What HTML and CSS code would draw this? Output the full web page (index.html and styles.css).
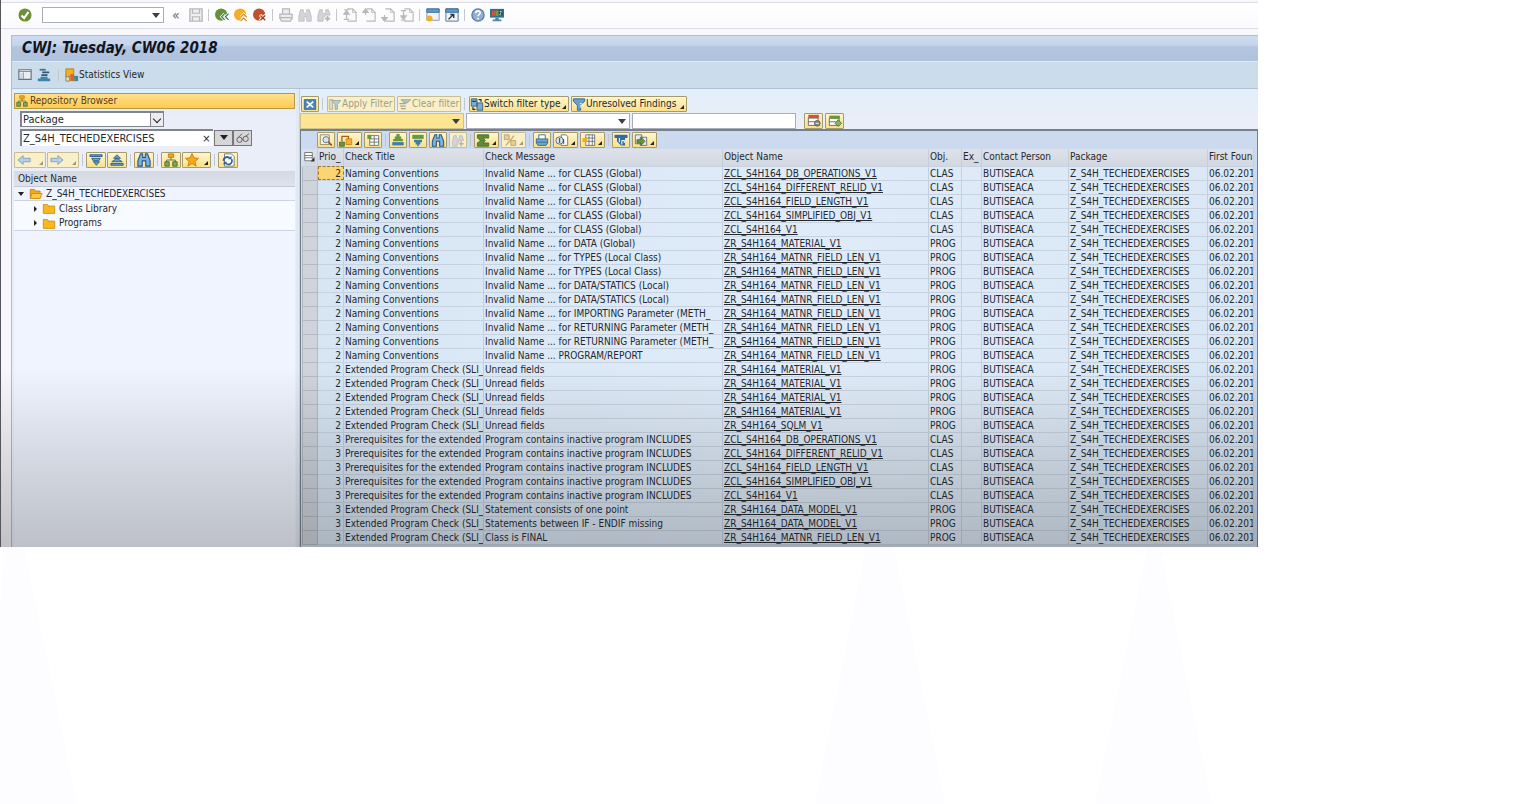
FILE: index.html
```
<!DOCTYPE html>
<html lang="en">
<head>
  <meta charset="UTF-8">
  <title>CWJ: Tuesday, CW06 2018</title>
  <link rel="stylesheet" href="styles.css">
</head>
<body>

<!-- icon set, all drawn on a 16x16 grid -->
<svg class="defs" aria-hidden="true">
  <symbol id="i-ok" viewBox="0 0 16 16"><circle cx="8" cy="8" r="7.5" fill="#6f8f35"/><path d="M4 8.5l3 3 5-7" fill="none" stroke="#fff" stroke-width="2.4"/></symbol>
  <symbol id="i-save" viewBox="0 0 16 16"><path d="M1 1h14v14H1z" fill="#eeeef0" stroke="#b9b9bd" stroke-width="1.6"/><path d="M4 1v5h8V1M4 15v-5h8v5" fill="none" stroke="#b9b9bd" stroke-width="1.4"/></symbol>
  <symbol id="i-back" viewBox="0 0 16 16"><circle cx="7" cy="7.5" r="7" fill="#64913d"/><path d="M11 6.500l-3.500 3.500 3.500 3.500M15.500 6.500L12 10l3.500 3.500" fill="none" stroke="#fff" stroke-width="3"/><path d="M11 6.500l-3.500 3.500 3.500 3.500M15.500 6.500L12 10l3.500 3.500" fill="none" stroke="#3f7050" stroke-width="1.300"/></symbol>
  <symbol id="i-exit" viewBox="0 0 16 16"><circle cx="7" cy="7.500" r="7" fill="#f2ae27"/><path d="M7.500 10.500L11 7l3.500 3.500M7.500 15L11 11.500l3.500 3.500" fill="none" stroke="#fff" stroke-width="3"/><path d="M7.500 10.500L11 7l3.500 3.500M7.500 15L11 11.500l3.500 3.500" fill="none" stroke="#c98518" stroke-width="1.300"/></symbol>
  <symbol id="i-cancel" viewBox="0 0 16 16"><circle cx="7" cy="7.500" r="7" fill="#c0512a"/><path d="M8 8l6.500 6.500M14.500 8L8 14.500" stroke="#fff" stroke-width="3.600"/><path d="M8.500 8.500l5.500 5.500M14 8.500L8.500 14" stroke="#a5391c" stroke-width="1.500"/></symbol>
  <symbol id="i-print" viewBox="0 0 16 16"><path d="M4 7V1h8v6M1 7h14v5l-2 3H3l-2-3z" fill="#ececee" stroke="#b5b5ba" stroke-width="1.400"/><path d="M1 11h14" stroke="#b5b5ba" stroke-width="1.400"/></symbol>
  <symbol id="i-find" viewBox="0 0 16 16"><path d="M3 2h3v3l1 1h2l1-1V2h3l2 7v6h-5v-5H7v5H1V9z" fill="#d4d4d8" stroke="#bdbdc2"/></symbol>
  <symbol id="i-findnext" viewBox="0 0 16 16"><path d="M3 2h3v3l1 1h2l1-1V2h3l2 6H9v2H7v5H1V9z" fill="#d4d4d8" stroke="#bdbdc2"/><path d="M12 9v6M9 12h6" stroke="#b5b5ba" stroke-width="2"/></symbol>
  <symbol id="i-page" viewBox="0 0 16 16"><path d="M5 1h6l4 4v10H5" fill="#fafafa" stroke="#b9b9bd" stroke-width="1.300"/><path d="M11 1v4h4" fill="none" stroke="#b9b9bd"/></symbol>
  <symbol id="i-first" viewBox="0 0 16 16"><use href="#i-page"/><path d="M1 2h6M4 3l-3 4h6zM4 7v5M1 13h6" fill="#b9b9bd" stroke="#b9b9bd" stroke-width="1.400"/></symbol>
  <symbol id="i-prev" viewBox="0 0 16 16"><use href="#i-page"/><path d="M1 5l3-4 3 4zM4 4v4" fill="#b9b9bd" stroke="#b9b9bd" stroke-width="1.400"/></symbol>
  <symbol id="i-next" viewBox="0 0 16 16"><use href="#i-page"/><path d="M1 11l3 4 3-4zM4 12V8" fill="#b9b9bd" stroke="#b9b9bd" stroke-width="1.400"/></symbol>
  <symbol id="i-last" viewBox="0 0 16 16"><use href="#i-page"/><path d="M1 3h6M4 3v6M1 9l3 4 3-4zM1 14h6" fill="#b9b9bd" stroke="#b9b9bd" stroke-width="1.400"/></symbol>
  <symbol id="i-session" viewBox="0 0 16 16"><path d="M1 1h14v13H1z" fill="#eef4fa" stroke="#7d93a8"/><path d="M1 1h14v4H1z" fill="#5b9bc9" stroke="#3a6a94"/><circle cx="4" cy="12" r="3.500" fill="#f5b022"/></symbol>
  <symbol id="i-shortcut" viewBox="0 0 16 16"><path d="M1 1h14v14H1z" fill="#eef4fa" stroke="#46698a"/><path d="M1 1h14v4H1z" fill="#5b9bc9" stroke="#3a6a94"/><path d="M4 13l5-5M6 7.500h4v4" fill="none" stroke="#333" stroke-width="1.600"/></symbol>
  <symbol id="i-help" viewBox="0 0 16 16"><circle cx="8" cy="8" r="7" fill="#8fb0d2" stroke="#54799f" stroke-width="1.400"/><path d="M5.500 6c0-3.500 5-3.500 5-.5 0 2-2.500 2-2.500 4M8 11v2" fill="none" stroke="#fff" stroke-width="1.800"/></symbol>
  <symbol id="i-monitor" viewBox="0 0 16 16"><path d="M0 1h16v10H0z" fill="#2c6f98"/><path d="M2 3h6v6H2z" fill="#d4502c"/><path d="M7 3h3v6H7z" fill="#70a03c"/><path d="M10 3h4v6h-4z" fill="#193c52"/><path d="M11 4h2l-2 4h2" fill="none" stroke="#fff" stroke-width=".8"/><path d="M6 11h4v2h3v2H3v-2h3z" fill="#4c86a8"/></symbol>
  <symbol id="i-layout" viewBox="0 0 16 16"><path d="M1 2h14v11H1z" fill="#e9eef4" stroke="#66707c" stroke-width="1.300"/><path d="M1 4h14M6 5v8" stroke="#7a8592"/><path d="M3 7h1M3 9h1M3 11h1" stroke="#8c96a3"/></symbol>
  <symbol id="i-tree" viewBox="0 0 16 16"><path d="M3 1h7v2H3z" fill="#3d7199"/><path d="M6 4h8v2H6zM5 7h7v2H5z" fill="#2f5878"/><path d="M1 12h14v3H1zM4 10h8v2H4z" fill="#3e84ab"/></symbol>
  <symbol id="i-stat" viewBox="0 0 16 16"><path d="M1 1h9v9H1z" fill="#f4ae20" stroke="#b97d13"/><path d="M1 10h4v5H1z" fill="#e8e0d0" stroke="#8b7a50"/><path d="M6 7h4v8H6z" fill="#d9622e"/><path d="M10 9h5v6h-5z" fill="#3e84ab"/><path d="M9 11h3v4H9z" fill="#6c9a3f"/></symbol>
  <symbol id="i-repo" viewBox="0 0 16 16"><path d="M5 1h6v4H5z" fill="#f2a51d" stroke="#c77c10"/><path d="M8 5v3M3 11V8h10v3" fill="none" stroke="#4e6b30"/><path d="M1 10h5v5H1zM10 10h5v5h-5z" fill="#83a753" stroke="#4a6d2b"/></symbol>
  <symbol id="i-left" viewBox="0 0 16 16"><path d="M1 8l6-5v3h8v4H7v3z" fill="#b8cfe6" stroke="#7d9cbd"/></symbol>
  <symbol id="i-right" viewBox="0 0 16 16"><path d="M15 8L9 3v3H1v4h8v3z" fill="#b8cfe6" stroke="#7d9cbd"/></symbol>
  <symbol id="i-expand" viewBox="0 0 16 16"><path d="M1 2h14v2H1z" fill="#6a9dc4" stroke="#2c5d88"/><path d="M3 6h10l-2 3H5z" fill="#6a9dc4" stroke="#2c5d88"/><path d="M5 10h7l-3.500 4z" fill="#6a9dc4" stroke="#2c5d88"/></symbol>
  <symbol id="i-collapse" viewBox="0 0 16 16"><path d="M4 6l4-4 4 4zM2 10l6-4 6 4z" fill="#6a9dc4" stroke="#2c5d88"/><path d="M1 12h14v2H1z" fill="#6a9dc4" stroke="#2c5d88"/></symbol>
  <symbol id="i-glass" viewBox="0 0 16 16"><path d="M4 1h2.500v4h3V1H12l3 8v6h-5V9H6v6H1V9z" fill="#7db0da" stroke="#28598a" stroke-width="1.300"/></symbol>
  <symbol id="i-star" viewBox="0 0 16 16"><path d="M8 .5l2.300 5 5.200.6-4 3.500 1.200 5.400L8 12.200 3.300 15l1.200-5.400-4-3.500 5.200-.6z" fill="#f5a81c" stroke="#cd7f0c"/></symbol>
  <symbol id="i-reload" viewBox="0 0 16 16"><path d="M4 1h8l3 3v11H4z" fill="#fff" stroke="#66707c"/><path d="M3 9a4 4 0 0 1 7-3M12 7a4 4 0 0 1-7 4" fill="none" stroke="#2f6192" stroke-width="2"/><path d="M8 7h4V3zM7 10H3v4z" fill="#2f6192"/></symbol>
  <symbol id="i-specs" viewBox="0 0 16 16"><circle cx="4" cy="10" r="3" fill="none" stroke="#555"/><circle cx="11" cy="9" r="3" fill="none" stroke="#555"/><path d="M3 7l4-4M11 6l4-3M7 10l1-1" stroke="#555"/></symbol>
  <symbol id="i-folder" viewBox="0 0 16 16"><path d="M1 3h5l1.500 2H15v9H1z" fill="#f9b91d" stroke="#c98a12"/></symbol>
  <symbol id="i-open" viewBox="0 0 16 16"><path d="M1 3h5l1.500 2H13v9H1z" fill="#f6a71b" stroke="#b97d13"/><path d="M3 8h12.500L13 14H1z" fill="#ffc83e" stroke="#c98a12"/></symbol>
  <symbol id="i-close" viewBox="0 0 16 16"><path d="M1 2h14v12H1z" fill="#4b88b8" stroke="#2f6192"/><path d="M4 4.500l8 7M12 4.500l-8 7" stroke="#fff" stroke-width="2.200"/></symbol>
  <symbol id="i-apply" viewBox="0 0 16 16"><path d="M1 2h4v12H1z" fill="#dcdac4" stroke="#b1ac8c"/><path d="M4 3h11l-4 5v6H8V8z" fill="#b9cad0" stroke="#92a5ab"/></symbol>
  <symbol id="i-clear" viewBox="0 0 16 16"><path d="M3 2h12l-4 4H7z" fill="#b3c2c6" stroke="#92a5ab"/><path d="M1 7h8M2 10h7M3 13h6" stroke="#a7a58c" stroke-width="1.500"/></symbol>
  <symbol id="i-switch" viewBox="0 0 16 16"><path d="M1 1h7v9H1zM8 6h7v9H8z" fill="#79add3" stroke="#285a84"/><path d="M10 2h3v3M6 14H3v-3M2 4h5" fill="none" stroke="#222" stroke-width="1.300"/></symbol>
  <symbol id="i-filter" viewBox="0 0 16 16"><path d="M1 1h14v3l-5 5v6H6V9L1 4z" fill="#68a0cb" stroke="#2b5d89"/><path d="M9 7h3v2h-2v3" fill="none" stroke="#fff"/></symbol>
  <symbol id="i-rowdel" viewBox="0 0 16 16"><path d="M1 5h12v9H1z" fill="#fff" stroke="#555"/><path d="M1 1h13v4H1z" fill="#d4522d"/><path d="M1 9.500h8" stroke="#555"/><circle cx="12" cy="11.500" r="3.500" fill="#888" stroke="#555"/><path d="M10 11.500h4" stroke="#fff"/></symbol>
  <symbol id="i-rowadd" viewBox="0 0 16 16"><path d="M1 5h12v9H1z" fill="#fff" stroke="#555"/><path d="M1 2h13v4H1z" fill="#6a973e"/><path d="M1 9.500h8" stroke="#555"/><path d="M12 7l4 4.500-4 4-4-4z" fill="#8bb265" stroke="#40682a"/></symbol>
  <symbol id="i-detail" viewBox="0 0 16 16"><path d="M1 1h11v12H1z" fill="#f7f3e2" stroke="#877e60"/><circle cx="8" cy="7" r="3.800" fill="#d8e4ea" stroke="#55616c"/><path d="M11 10l4 4" stroke="#8d4d20" stroke-width="2"/></symbol>
  <symbol id="i-jump" viewBox="0 0 16 16"><path d="M0 10h6v5H0z" fill="#6a973e" stroke="#40682a"/><path d="M8 6h7v7H8z" fill="#f7b32e" stroke="#c47b12"/><path d="M3 9V3h8v3" fill="none" stroke="#a65f12" stroke-width="1.600"/></symbol>
  <symbol id="i-grid" viewBox="0 0 16 16"><path d="M4 2h11v12H4z" fill="#fff" stroke="#59636d"/><path d="M4 6h11M4 10h11M9.500 2v12" stroke="#59636d"/><path d="M1 1h5v5H1z" fill="#6a973e"/></symbol>
  <symbol id="i-asc" viewBox="0 0 16 16"><path d="M6 0h4v3h2v3h2v3H2V6h2V3h2z" fill="#6a973e"/><path d="M1 10h14v4H1z" fill="#3e7ea6"/></symbol>
  <symbol id="i-desc" viewBox="0 0 16 16"><path d="M1 1h14v5H1z" fill="#6a973e"/><path d="M3 7h10v3h-2v3H9v2H7v-2H5v-3H3z" fill="#3e7ea6"/></symbol>
  <symbol id="i-sum" viewBox="0 0 16 16"><path d="M1 1h14v4H8l3 3-3 3h7v4H1v-4l4-3-4-3z" fill="#5f8a36" stroke="#40682a"/></symbol>
  <symbol id="i-sub" viewBox="0 0 16 16"><path d="M1 1h6v6H1zM9 8h6v6H9z" fill="#e6cd93" stroke="#b1a06c"/><path d="M3 14L13 2" stroke="#c9a56b" stroke-width="1.600"/></symbol>
  <symbol id="i-printer" viewBox="0 0 16 16"><path d="M4 6V1h8v5" fill="#fff" stroke="#285a84"/><path d="M1 6h14v5l-2 3H3l-2-3z" fill="#6fa8d0" stroke="#285a84"/><path d="M2 10h12" stroke="#285a84"/></symbol>
  <symbol id="i-view" viewBox="0 0 16 16"><path d="M7 1h6l2 2v11H7z" fill="#fff" stroke="#59636d"/><circle cx="5" cy="8" r="4.500" fill="#dce7ee" stroke="#4c5c6c"/><path d="M5 5v6M10 6v6" stroke="#2f6192" stroke-width="1.500"/></symbol>
  <symbol id="i-cols" viewBox="0 0 16 16"><path d="M4 1h11v13H4z" fill="#fff" stroke="#59636d"/><path d="M4 5h11M4 9h11M8 1v13M12 1v13" stroke="#59636d"/><path d="M0 5h6v5H0z" fill="#f4a91d"/></symbol>
  <symbol id="i-funnel" viewBox="0 0 16 16"><path d="M0 1h16v4h-3v9H8L3 9V5H0z" fill="#2f6d9c"/><path d="M6 5v5M9 8v5M9 8h3v3" fill="none" stroke="#fff" stroke-width="1.300"/></symbol>
  <symbol id="i-export" viewBox="0 0 16 16"><path d="M1 1h8v11H1zM7 4h8v10H7z" fill="#e6eef2" stroke="#59636d"/><path d="M3 7h5V4l5 5-5 5v-3H3z" fill="#6a973e" stroke="#40682a"/></symbol>
  <symbol id="i-selall" viewBox="0 0 16 16"><path d="M1 2h10v11H1z" fill="#fff" stroke="#555"/><path d="M1 6h10M1 9h10" stroke="#555"/><path d="M14 8v6H9z" fill="#333"/></symbol>
</svg>

<div class="app">
  <header class="menu">
    <button class="plain" title="Enter"><svg><use href="#i-ok"/></svg></button>
    <span class="select command"><select aria-label="Command"><option></option></select></span>
    <button class="plain chevrons" title="Collapse">«</button>
    <button class="plain" title="Save"><svg><use href="#i-save"/></svg></button>
    <i class="sep"></i>
    <button class="plain" title="Back"><svg><use href="#i-back"/></svg></button>
    <button class="plain" title="Exit"><svg><use href="#i-exit"/></svg></button>
    <button class="plain" title="Cancel"><svg><use href="#i-cancel"/></svg></button>
    <i class="sep"></i>
    <button class="plain" title="Print"><svg><use href="#i-print"/></svg></button>
    <button class="plain" title="Find"><svg><use href="#i-find"/></svg></button>
    <button class="plain" title="Find next"><svg><use href="#i-findnext"/></svg></button>
    <i class="sep"></i>
    <button class="plain" title="First page"><svg><use href="#i-first"/></svg></button>
    <button class="plain" title="Previous page"><svg><use href="#i-prev"/></svg></button>
    <button class="plain" title="Next page"><svg><use href="#i-next"/></svg></button>
    <button class="plain" title="Last page"><svg><use href="#i-last"/></svg></button>
    <i class="sep"></i>
    <button class="plain" title="New session"><svg><use href="#i-session"/></svg></button>
    <button class="plain" title="Create shortcut"><svg><use href="#i-shortcut"/></svg></button>
    <i class="sep"></i>
    <button class="plain" title="Help"><svg><use href="#i-help"/></svg></button>
    <button class="plain" title="Local layout"><svg><use href="#i-monitor"/></svg></button>
  </header>

  <div class="screen">
    <h1>CWJ: Tuesday, CW06 2018</h1>
    <div class="actions">
      <button class="plain" title="Full screen"><svg><use href="#i-layout"/></svg></button>
      <button class="plain" title="Hierarchy"><svg><use href="#i-tree"/></svg></button>
      <i class="sep"></i>
      <button class="plain"><svg><use href="#i-stat"/></svg>Statistics View</button>
    </div>

    <div class="work">
      <aside class="browser">
        <h2><svg><use href="#i-repo"/></svg>Repository Browser</h2>
        <div class="picker">
          <span class="select boxed kind"><select aria-label="Object type"><option>Package</option></select></span>
          <div class="object">
            <input type="text" aria-label="Object name" value="Z_S4H_TECHEDEXERCISES">
            <button class="plain clear" title="Clear">×</button>
            <button class="grey" title="History"><i class="down"></i></button>
            <button class="grey" title="Display"><svg><use href="#i-specs"/></svg></button>
          </div>
        </div>
        <div class="tools nav">
          <button class="tool off more" title="Back"><svg><use href="#i-left"/></svg></button>
          <button class="tool off more" title="Forward"><svg><use href="#i-right"/></svg></button>
          <i class="sep"></i>
          <button class="tool" title="Expand"><svg><use href="#i-expand"/></svg></button>
          <button class="tool" title="Collapse"><svg><use href="#i-collapse"/></svg></button>
          <i class="sep"></i>
          <button class="tool" title="Find"><svg><use href="#i-glass"/></svg></button>
          <i class="sep"></i>
          <button class="tool" title="Hierarchy"><svg><use href="#i-repo"/></svg></button>
          <button class="tool more" title="Favorites"><svg><use href="#i-star"/></svg></button>
          <i class="sep"></i>
          <button class="tool" title="Refresh"><svg><use href="#i-reload"/></svg></button>
        </div>
        <div class="tree">
          <div class="tree-head">Object Name</div>
          <ul>
            <li class="root"><i class="down"></i><svg><use href="#i-open"/></svg>Z_S4H_TECHEDEXERCISES</li>
            <li class="leaf"><i class="side"></i><svg><use href="#i-folder"/></svg>Class Library</li>
            <li class="leaf last"><i class="side"></i><svg><use href="#i-folder"/></svg>Programs</li>
          </ul>
        </div>
      </aside>

      <div class="splitter"></div>

      <main class="findings">
        <div class="filters">
          <button class="tool" title="Close"><svg><use href="#i-close"/></svg></button>
          <i class="sep"></i>
          <button class="tool text apply" disabled><svg><use href="#i-apply"/></svg>Apply Filter</button>
          <button class="tool text wipe" disabled><svg><use href="#i-clear"/></svg>Clear filter</button>
          <i class="sep"></i>
          <button class="tool text switch more"><svg><use href="#i-switch"/></svg>Switch filter type</button>
          <button class="tool text unresolved more"><svg><use href="#i-filter"/></svg>Unresolved Findings</button>
        </div>
        <div class="criteria">
          <span class="select yellow"><select aria-label="Filter field"><option></option></select></span>
          <span class="select"><select aria-label="Operator"><option></option></select></span>
          <input type="text" aria-label="Filter value">
          <button class="tool" title="Remove row"><svg><use href="#i-rowdel"/></svg></button>
          <button class="tool" title="Add row"><svg><use href="#i-rowadd"/></svg></button>
        </div>

        <div class="grid">
          <div class="tools">
            <button class="tool" title="Details"><svg><use href="#i-detail"/></svg></button>
            <button class="tool more" title="Go to"><svg><use href="#i-jump"/></svg></button>
            <button class="tool" title="Select"><svg><use href="#i-grid"/></svg></button>
            <i class="sep"></i>
            <button class="tool" title="Sort ascending"><svg><use href="#i-asc"/></svg></button>
            <button class="tool" title="Sort descending"><svg><use href="#i-desc"/></svg></button>
            <button class="tool" title="Find"><svg><use href="#i-glass"/></svg></button>
            <button class="tool off" title="Find next"><svg><use href="#i-findnext"/></svg></button>
            <i class="sep"></i>
            <button class="tool more" title="Total"><svg><use href="#i-sum"/></svg></button>
            <button class="tool off more" title="Subtotals"><svg><use href="#i-sub"/></svg></button>
            <i class="sep"></i>
            <button class="tool" title="Print"><svg><use href="#i-printer"/></svg></button>
            <button class="tool more" title="Views"><svg><use href="#i-view"/></svg></button>
            <button class="tool more" title="Layout"><svg><use href="#i-cols"/></svg></button>
            <i class="sep"></i>
            <button class="tool" title="Filter"><svg><use href="#i-funnel"/></svg></button>
            <button class="tool more" title="Export"><svg><use href="#i-export"/></svg></button>
          </div>
          <table>
            <colgroup>
              <col class="c-sel"><col class="c-prio"><col class="c-title"><col><col class="c-name">
              <col class="c-obj"><col class="c-ex"><col class="c-person"><col class="c-package"><col class="c-date">
            </colgroup>
            <thead>
              <tr>
                <th><svg><use href="#i-selall"/></svg></th>
                <th>Prio_</th>
                <th>Check Title</th>
                <th>Check Message</th>
                <th>Object Name</th>
                <th>Obj.</th>
                <th>Ex_</th>
                <th>Contact Person</th>
                <th>Package</th>
                <th>First Foun</th>
              </tr>
            </thead>
            <tbody id="rows"></tbody>
          </table>
        </div>
      </main>
    </div>
  </div>
</div>

<svg class="rays" viewBox="0 0 1536 257" preserveAspectRatio="none" aria-hidden="true">
  <path d="M5 0h19l53 257H0V60zM866 0h28l51 257H815zM1147 0h13l52 257h-117z" fill="#fdfcff"/>
</svg>

<script>
  var naming = 'Naming Conventions'
  var extended = 'Extended Program Check (SLI_'
  var prereq = 'Prerequisites for the extended'
  var inactive = 'Program contains inactive program INCLUDES'

  // prio, check title, check message, object name
  var findings = [
    [2, naming, 'Invalid Name ... for CLASS (Global)', 'ZCL_S4H164_DB_OPERATIONS_V1'],
    [2, naming, 'Invalid Name ... for CLASS (Global)', 'ZCL_S4H164_DIFFERENT_RELID_V1'],
    [2, naming, 'Invalid Name ... for CLASS (Global)', 'ZCL_S4H164_FIELD_LENGTH_V1'],
    [2, naming, 'Invalid Name ... for CLASS (Global)', 'ZCL_S4H164_SIMPLIFIED_OBJ_V1'],
    [2, naming, 'Invalid Name ... for CLASS (Global)', 'ZCL_S4H164_V1'],
    [2, naming, 'Invalid Name ... for DATA (Global)', 'ZR_S4H164_MATERIAL_V1'],
    [2, naming, 'Invalid Name ... for TYPES (Local Class)', 'ZR_S4H164_MATNR_FIELD_LEN_V1'],
    [2, naming, 'Invalid Name ... for TYPES (Local Class)', 'ZR_S4H164_MATNR_FIELD_LEN_V1'],
    [2, naming, 'Invalid Name ... for DATA/STATICS (Local)', 'ZR_S4H164_MATNR_FIELD_LEN_V1'],
    [2, naming, 'Invalid Name ... for DATA/STATICS (Local)', 'ZR_S4H164_MATNR_FIELD_LEN_V1'],
    [2, naming, 'Invalid Name ... for IMPORTING Parameter (METH_', 'ZR_S4H164_MATNR_FIELD_LEN_V1'],
    [2, naming, 'Invalid Name ... for RETURNING Parameter (METH_', 'ZR_S4H164_MATNR_FIELD_LEN_V1'],
    [2, naming, 'Invalid Name ... for RETURNING Parameter (METH_', 'ZR_S4H164_MATNR_FIELD_LEN_V1'],
    [2, naming, 'Invalid Name ... PROGRAM/REPORT', 'ZR_S4H164_MATNR_FIELD_LEN_V1'],
    [2, extended, 'Unread fields', 'ZR_S4H164_MATERIAL_V1'],
    [2, extended, 'Unread fields', 'ZR_S4H164_MATERIAL_V1'],
    [2, extended, 'Unread fields', 'ZR_S4H164_MATERIAL_V1'],
    [2, extended, 'Unread fields', 'ZR_S4H164_MATERIAL_V1'],
    [2, extended, 'Unread fields', 'ZR_S4H164_SQLM_V1'],
    [3, prereq, inactive, 'ZCL_S4H164_DB_OPERATIONS_V1'],
    [3, prereq, inactive, 'ZCL_S4H164_DIFFERENT_RELID_V1'],
    [3, prereq, inactive, 'ZCL_S4H164_FIELD_LENGTH_V1'],
    [3, prereq, inactive, 'ZCL_S4H164_SIMPLIFIED_OBJ_V1'],
    [3, prereq, inactive, 'ZCL_S4H164_V1'],
    [3, extended, 'Statement consists of one point', 'ZR_S4H164_DATA_MODEL_V1'],
    [3, extended, 'Statements between IF - ENDIF missing', 'ZR_S4H164_DATA_MODEL_V1'],
    [3, extended, 'Class is FINAL', 'ZR_S4H164_MATNR_FIELD_LEN_V1']
  ]

  document.getElementById('rows').innerHTML = findings.map(function (f) {
    // classes start with ZCL, everything else is a report
    var type = f[3].indexOf('ZCL') === 0 ? 'CLAS' : 'PROG'
    return `<tr><td></td><td>${f[0]}</td><td>${f[1]}</td><td>${f[2]}</td>
      <td><a href="#${f[3]}">${f[3]}</a></td><td>${type}</td><td></td>
      <td>BUTISEACA</td><td>Z_S4H_TECHEDEXERCISES</td><td>06.02.201</td></tr>`
  }).join('')
</script>
</body>
</html>
```
FILE: styles.css
```
* {
  box-sizing: border-box;
  margin: 0;
  padding: 0;
}

body {
  display: flex;
  flex-direction: column;
  min-height: 100vh;
  background: #fff;
  color: #24292f;
  font: 10px/14px "DejaVu Sans Condensed", "DejaVu Sans", Tahoma, sans-serif;
}

button, input, select {
  font: inherit;
  color: inherit;
}

ul {
  list-style: none;
}

svg {
  flex: none;
  width: 14px;
  height: 14px;
}

.defs {
  position: absolute;
  width: 0;
  height: 0;
}

.app {
  position: relative;
  display: flex;
  flex-direction: column;
  width: calc(100% - 278px);
  padding-top: 2px;
  border-left: 1px solid #55565c;
  background: #f7f7fc;
}

/* shade that falls over the lower part of the window */
.app::after {
  content: "";
  position: absolute;
  inset: auto 0 0 0;
  height: 180px;
  background: linear-gradient(rgba(20, 20, 20, 0), rgba(20, 20, 20, 0.12) 50%, rgba(20, 20, 20, 0.23));
  pointer-events: none;
}

.rays {
  flex: 1;
  width: 100%;
  height: auto;
  min-height: 0;
}

/* shared controls */
.plain {
  display: flex;
  align-items: center;
  gap: 1px;
  border: 0;
  background: none;
}

.sep {
  flex: none;
  width: 2px;
  height: 12px;
  border-left: 1px solid #c3c8d0;
}

.tool {
  position: relative;
  display: flex;
  align-items: center;
  justify-content: center;
  width: 18px;
  height: 16px;
  border: 1px solid #a79b6c;
  border-radius: 1px;
  background: linear-gradient(#fff6cf, #fbe08a);
  white-space: nowrap;
}

.tool svg {
  width: 14px;
  height: 13px;
}

.tool.more {
  justify-content: flex-start;
  width: 25px;
  padding-left: 1px;
}

.tool.more::after {
  content: "";
  position: absolute;
  right: 2px;
  bottom: 2px;
  border: solid transparent;
  border-width: 2px;
  border-right-color: #222;
  border-bottom-color: #222;
}

.tool.off, .tool:disabled {
  border-color: #c6bd98;
  background: #faf0c8;
  color: #a19d88;
}

.tool.off.more::after {
  border-right-color: #9d9880;
  border-bottom-color: #9d9880;
}

.tool.text {
  justify-content: flex-start;
  padding-left: 0;
}

.down {
  border: 4px solid transparent;
  border-top: 5px solid #222;
  border-bottom: 0;
}

.side {
  border: 3px solid transparent;
  border-left: 3px solid #222;
  border-right: 0;
}

.select {
  position: relative;
  display: flex;
}

.select select {
  width: 100%;
  height: 16px;
  padding-left: 1px;
  border: 1px solid #a9adb8;
  border-radius: 0;
  background: #fff;
  appearance: none;
}

.select::after {
  content: "";
  position: absolute;
  top: 6px;
  right: 4px;
  border: 4px solid transparent;
  border-top: 5px solid #38404c;
  border-bottom: 0;
  pointer-events: none;
}

/* top bar */
.menu {
  display: flex;
  align-items: center;
  gap: 5px;
  height: 27px;
  padding: 0 0 2px 17px;
  border-top: 1px solid #dcdce4;
  border-bottom: 1px solid #dcdce4;
  background: linear-gradient(#fff, #fafafe);
}

.command {
  width: 122px;
  margin: 0 3px 0 5px;
}

.chevrons {
  width: 12px;
  color: #666;
  font-size: 14px;
}

/* screen title */
.screen {
  margin: 6px 0 0 10px;
  border-left: 1px solid #b4bccb;
}

h1 {
  height: 27px;
  padding-left: 10px;
  border-top: 1px solid #b3bdd0;
  border-bottom: 1px solid #e1eaf4;
  background: linear-gradient(#cfdcf0, #c6d5ec 35%, #b3c5e0 45%, #afc3dd);
  color: #10151f;
  font-size: 15px;
  font-style: italic;
  line-height: 24px;
}

.actions {
  display: flex;
  align-items: center;
  gap: 5px;
  height: 27px;
  padding-left: 6px;
  border-bottom: 1px solid #b2c2d6;
  background: #cbdcea;
}

.actions .sep {
  margin-left: 2px;
}

.actions .plain {
  gap: 0;
}

.work {
  display: flex;
  background: linear-gradient(#e1eefb, #e9eef8 30px);
}

/* left pane */
.browser {
  display: flex;
  flex-direction: column;
  width: 284px;
  padding: 4px 1px 0 2px;
}

.browser h2 {
  display: flex;
  align-items: center;
  gap: 1px;
  height: 16px;
  border: 1px solid #b99845;
  background: linear-gradient(#ffe08a, #fdcb51);
  color: #5b3b1a;
  font-size: 10px;
  font-weight: normal;
}

.browser h2 svg {
  height: 12px;
}

.picker {
  display: flex;
  flex-direction: column;
  gap: 2px;
  padding: 2px 6px 0;
  font-size: 11px;
}

.kind {
  width: 144px;
}

.boxed select {
  border: 1px solid #80848c;
  border-width: 2px 1px 1px 2px;
}

.kind::after {
  top: 5px;
  right: 4px;
  width: 5px;
  height: 5px;
  border: solid #222;
  border-width: 0 1px 1px 0;
  transform: rotate(45deg);
}

.kind::before {
  content: "";
  position: absolute;
  inset: 2px 1px 1px auto;
  width: 12px;
  border-left: 1px solid #80848c;
  background: #ececf0;
  pointer-events: none;
}

.object {
  display: flex;
  align-items: center;
}

.object input {
  width: 180px;
  height: 17px;
  padding-left: 1px;
  border: solid #80848c;
  border-width: 2px 0 0 2px;
  background: #fff;
}

.clear {
  justify-content: center;
  width: 13px;
  height: 17px;
  margin-right: 1px;
  border-top: 2px solid #80848c;
  background: #fff;
}

.grey {
  display: flex;
  align-items: center;
  justify-content: center;
  width: 19px;
  height: 16px;
  border: 1px solid #74777c;
  background: #d6d6d6;
}

.tools {
  display: flex;
  align-items: center;
  gap: 2px;
}

.tools .sep {
  width: 1px;
  margin: 0 1px;
}

.nav {
  gap: 1px;
  height: 22px;
  margin-top: 3px;
}

.nav .tool {
  width: 20px;
}

.nav .tool.more {
  width: 29px;
}

.nav .tool.off {
  width: 32px;
}

.nav .tool svg {
  width: 16px;
  height: 14px;
}

.nav .sep {
  margin: 0 2px;
}

.tree {
  flex: 1;
  background: #f0f4ff;
}

.tree-head {
  height: 16px;
  padding-left: 4px;
  border-bottom: 1px solid #c3c8d4;
  background: linear-gradient(#d3d8e3, #dfe3ec);
  line-height: 15px;
}

.tree li {
  display: flex;
  align-items: center;
  gap: 3px;
  height: 14px;
}

.tree .root {
  padding-left: 4px;
  border-bottom: 1px solid #ccd4e2;
}

.tree .leaf {
  height: 15px;
  padding-left: 20px;
  background: #f7faff;
}

.tree .last {
  border-bottom: 1px solid #ccd4e2;
}

.leaf .side {
  margin-right: 2px;
}

.root .down {
  border-width: 4px 3px 0;
  margin-right: 2px;
}

.tree svg {
  height: 13px;
}

.splitter {
  width: 4px;
  border-right: 1px solid #c9d1df;
  background: #e1e9f5;
}

/* right pane */
.findings {
  flex: 1;
  min-width: 0;
  padding-top: 7px;
}

.filters {
  display: flex;
  align-items: center;
  gap: 2px;
  padding-left: 1px;
}

.filters .sep {
  margin: 0 1px;
}

.filters .apply {
  width: 68px;
}

.filters .wipe {
  width: 64px;
}

.filters .switch {
  width: 100px;
}

.filters .unresolved {
  width: 116px;
}

.criteria {
  display: flex;
  align-items: center;
  gap: 2px;
  height: 17px;
}

.criteria .select, .criteria input {
  width: 164px;
  height: 16px;
}

.criteria input {
  margin-right: 6px;
  border: 1px solid #a9adb8;
  background: #fff;
}

.yellow select {
  border-color: #cfc08c;
  background: #fde592;
}

.criteria .tool {
  width: 19px;
}

.grid {
  padding: 0 3px 2px 1px;
  border: 1px solid #75808f;
  border-width: 2px 1px 0;
  background: #cbdaee;
}

.grid .tools {
  height: 18px;
  padding-left: 15px;
}

table {
  width: 100%;
  border-collapse: collapse;
  table-layout: fixed;
  background: linear-gradient(100deg, #d7e5f3, #dfebf8 50%, #d9e6f3);
}

.c-sel { width: 15px; }
.c-prio { width: 26px; }
.c-title { width: 140px; }
.c-name { width: 206px; }
.c-obj { width: 33px; }
.c-ex { width: 20px; }
.c-person { width: 87px; }
.c-package { width: 139px; }
.c-date { width: 46px; }

th, td {
  height: 14px;
  padding-left: 1px;
  border-right: 1px solid #c3cfdc;
  border-bottom: 1px solid #c6d2df;
  overflow: hidden;
  font-weight: normal;
  line-height: 13px;
  text-align: left;
  white-space: nowrap;
}

th {
  height: 17px;
  background: linear-gradient(#dce1ea, #d2d7e0);
  line-height: 16px;
}

th svg {
  display: block;
  width: 12px;
  height: 12px;
}

td:first-child {
  border: 1px solid #b3b8c3;
  background: #cfd3dc;
}

td:nth-child(2) {
  padding-right: 2px;
  text-align: right;
}

tr:first-child td:nth-child(2) {
  outline: 1px dashed #a67520;
  outline-offset: -1px;
  background: #fdd473;
}

td a {
  color: inherit;
}
```
